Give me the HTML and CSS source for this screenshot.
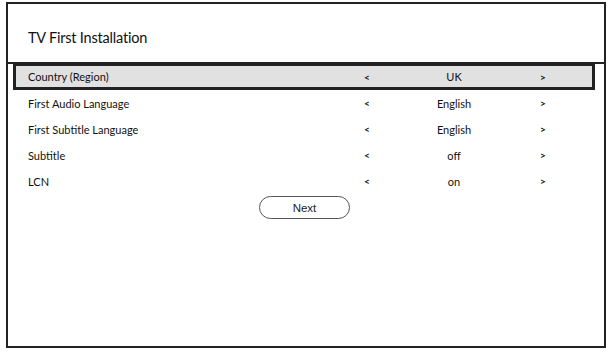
FILE: index.html
```html
<!DOCTYPE html>
<html lang="en">
<head>
<meta charset="utf-8">
<title>TV First Installation</title>
<link rel="stylesheet" href="styles.css">
</head>
<body>
<div class="frame">
  <div class="header"><h1 class="title">TV First Installation</h1></div>
  <div class="list">
    <div class="row selected"><span class="label">Country (Region)</span><span class="arrow">&lt;</span><span class="value">UK</span><span class="arrow">&gt;</span></div>
    <div class="row"><span class="label">First Audio Language</span><span class="arrow">&lt;</span><span class="value">English</span><span class="arrow">&gt;</span></div>
    <div class="row"><span class="label">First Subtitle Language</span><span class="arrow">&lt;</span><span class="value">English</span><span class="arrow">&gt;</span></div>
    <div class="row"><span class="label">Subtitle</span><span class="arrow">&lt;</span><span class="value">off</span><span class="arrow">&gt;</span></div>
    <div class="row"><span class="label">LCN</span><span class="arrow">&lt;</span><span class="value">on</span><span class="arrow">&gt;</span></div>
  </div>
  <div class="actions"><button class="next">Next</button></div>
</div>
</body>
</html>
```

FILE: styles.css
```css
html, body { margin: 0; padding: 0; background: #fff; }
body { font-family: Lato, "Open Sans", sans-serif; color: #111; }
.frame {
  box-sizing: border-box;
  margin: 2px 0 0 6px;
  width: 600px;
  height: 346px;
  border: 2px solid #222;
}
.header {
  box-sizing: border-box;
  height: 60px;
  border-bottom: 2px solid #222;
  display: flex;
  align-items: center;
  padding: 0 0 0 20px;
}
.title { margin: 0; padding-top: 8px; font-size: 14.5px; font-weight: 400; letter-spacing: -0.2px; }
.list { padding: 0 9px 0 5px; margin-top: -1px; }
.row {
  box-sizing: border-box;
  height: 26px;
  border: 3px solid transparent;
  padding-left: 12px;
  display: grid;
  grid-template-columns: 319px 40px 134px 44px 1fr;
  align-items: center;
  font-size: 11px;
}
.row.selected { background: #e1e1e1; border-color: #222; height: 27px; }
.arrow, .value { text-align: center; }
.arrow { font-size: 10px; font-weight: 700; }
.actions { display: flex; justify-content: center; margin-top: 2px; padding-right: 3px; }
.next {
  width: 91px; height: 23px;
  border: 1px solid #555;
  border-radius: 12px;
  background: #fff;
  font-family: "Liberation Sans", Arial, sans-serif;
  font-size: 11.5px;
  color: #222;
  padding: 0;
}
```
